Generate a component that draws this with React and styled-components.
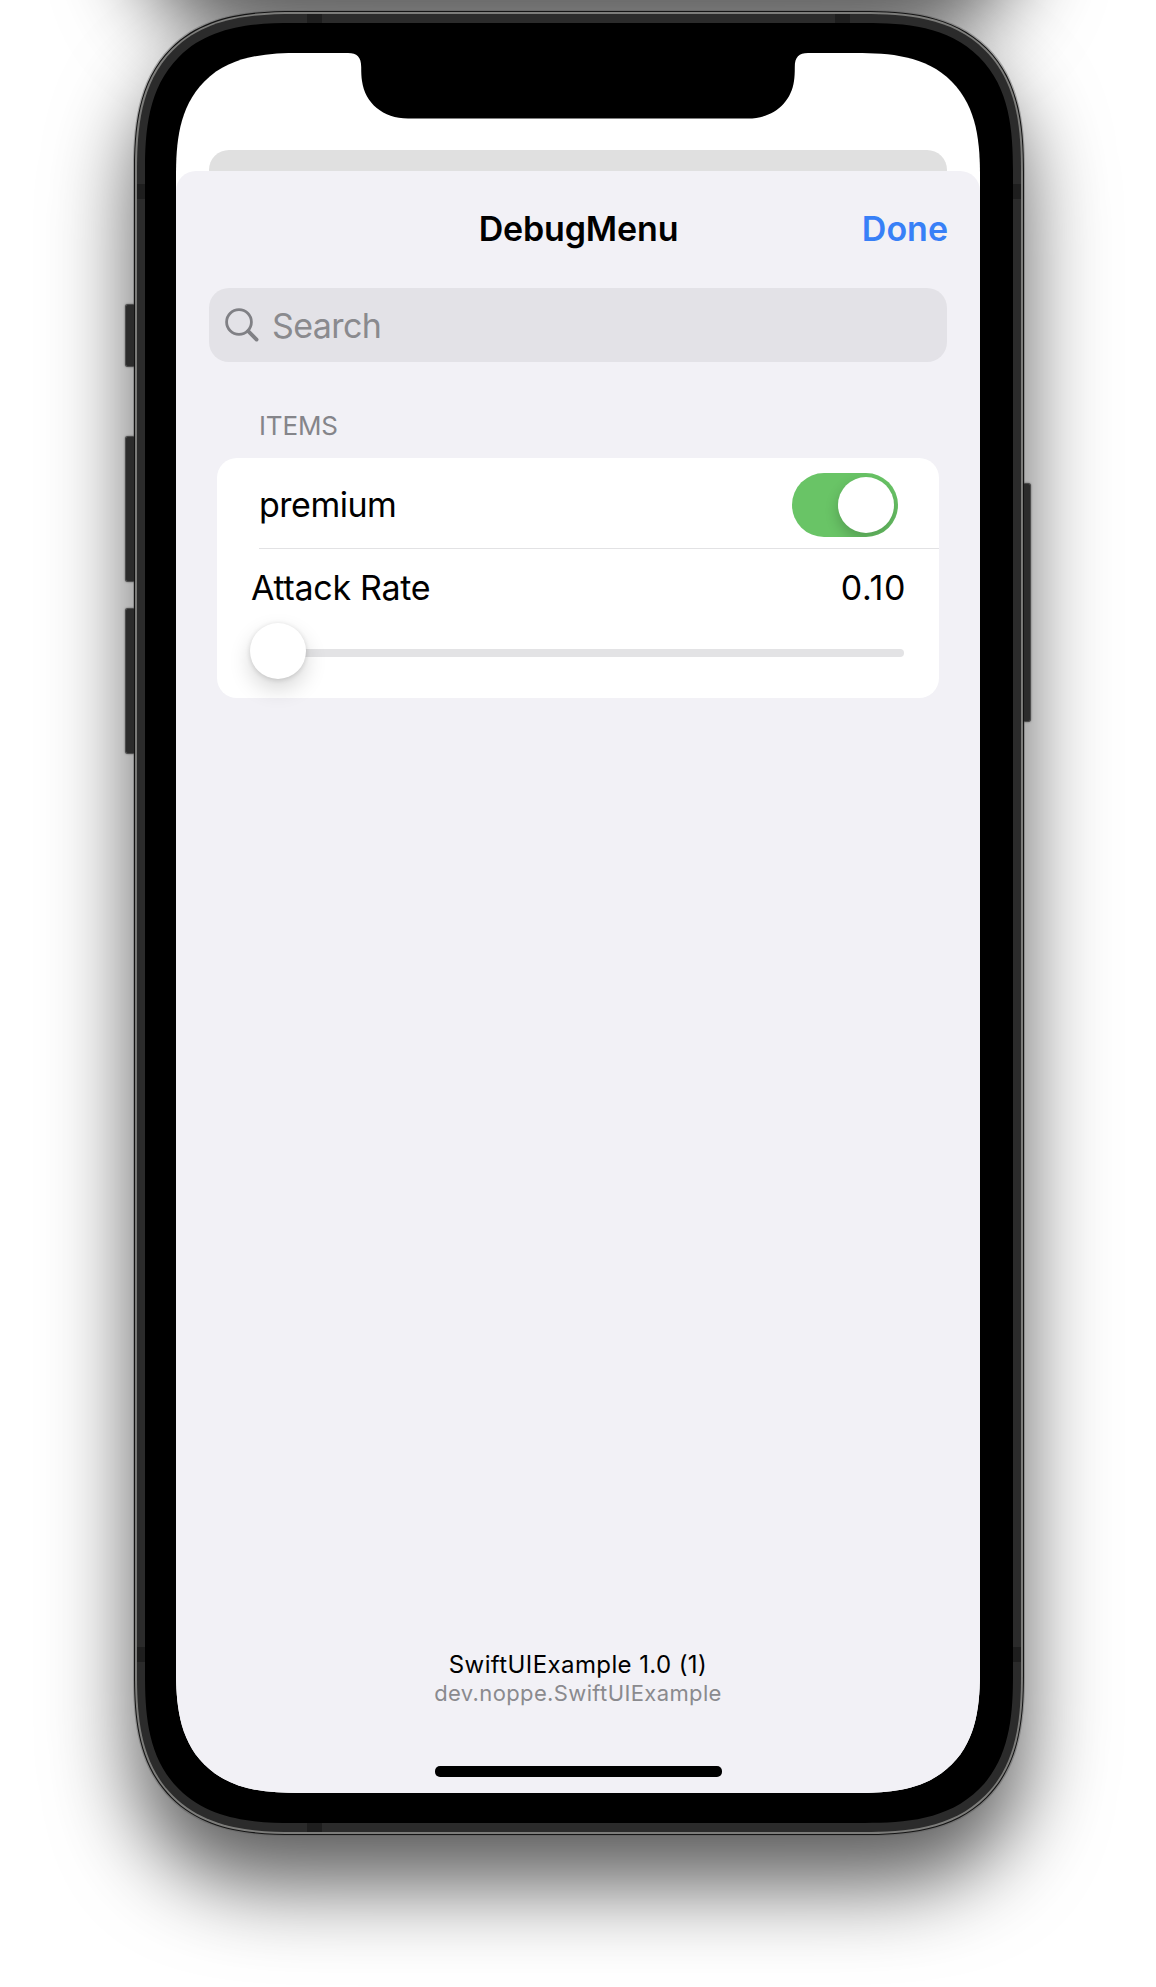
import React from "react";
import styled, { createGlobalStyle, css } from "styled-components";

const GlobalStyle = createGlobalStyle`
  * { box-sizing: border-box; }
  body {
    margin: 0;
    background: #fff;
    font-family: Inter, "Liberation Sans", sans-serif;
    -webkit-font-smoothing: antialiased;
  }
`;

const smoothCorners = (plain, smooth) => css`
  border-radius: ${plain}px;
  @supports (corner-shape: superellipse(1.415)) {
    border-radius: ${smooth}px;
    corner-shape: superellipse(1.415);
  }
`;

const Page = styled.main`
  width: 1156px;
  height: 1987px;
  overflow: hidden;
  display: flex;
  flex-direction: column;
  align-items: flex-start;
  gap: 16px;
  padding-left: 134px;
  background: #fff;
`;

const Device = styled.section`
  position: relative;
  flex: none;
  width: 890px;
  height: 1824px;
  margin-top: ${(p) => (p.$above ? "-1829px" : "0")};
  padding: 1px;
  background: #141414;
  ${smoothCorners(127, 162)}
  box-shadow: 0 0 0 1px rgba(90, 90, 90, 0.4), 0 50px 84px rgba(0, 0, 0, 0.64);
`;

const Highlight = styled.div`
  height: 100%;
  padding: 2px;
  background: #7c7c7a;
  ${smoothCorners(126, 161)}
`;

const Band = styled.div`
  position: relative;
  height: 100%;
  padding: 9px 8px;
  background: #2b2b2b;
  overflow: hidden;
  ${smoothCorners(124, 158)}
`;

const Antenna = styled.i`
  position: absolute;
  background: #1e1e1e;
  ${(p) => (p.$vertical ? "width: 8px; height: 15px;" : "width: 15px; height: 9px;")}
  ${(p) => p.$edge}: 0;
  ${(p) => p.$from}: ${(p) => p.$at}px;
`;

const Bezel = styled.div`
  height: 100%;
  padding: 30px 33px 30px 31px;
  background: #000;
  ${smoothCorners(116, 148)}
`;

const SideButton = styled.i`
  position: absolute;
  top: ${(p) => p.$top}px;
  height: ${(p) => p.$length}px;
  background: #2b2b2b;
  border: 1px solid #4c4c4c;
  box-shadow: 0 0 2px rgba(0, 0, 0, 0.5);
  ${(p) =>
    p.$right
      ? "right: -7px; width: 7px; border-left: 0; border-radius: 0 3px 3px 0;"
      : "left: -9px; width: 9px; border-right: 0; border-radius: 3px 0 0 3px;"}
`;

const Screen = styled.div`
  height: 100%;
  display: flex;
  flex-direction: column;
  background: #fff;
  overflow: hidden;
  ${smoothCorners(97, 124)}
`;

const StatusArea = styled.div`
  height: 97px;
  display: flex;
  justify-content: center;
  align-items: flex-start;
`;

const NotchShape = styled.svg`
  display: block;
  width: 460px;
  height: 66px;
`;

const PeekCard = styled.div`
  height: 40px;
  margin: 0 33px -19px;
  flex: none;
  border-radius: 20px;
  background: #e0e0e0;
`;

const Sheet = styled.div`
  flex: 1;
  z-index: 1;
  display: flex;
  flex-direction: column;
  border-radius: 20px 20px 0 0;
  background: #f2f1f6;
`;

const NavBar = styled.header`
  height: 115px;
  padding: 0 32px 0 33px;
  display: grid;
  grid-template-columns: 1fr auto 1fr;
  align-items: center;
`;

const Title = styled.h1`
  grid-column: 2;
  margin: 0;
  font-size: 34px;
  font-weight: 600;
  line-height: 42px;
  letter-spacing: -0.15px;
  color: #000;
`;

const DoneButton = styled.button`
  justify-self: end;
  padding: 0;
  border: 0;
  background: none;
  font: 600 34px/42px Inter, "Liberation Sans", sans-serif;
  color: #3880f7;
`;

const SearchField = styled.label`
  height: 74px;
  margin: 2px 33px 0;
  padding-left: 15px;
  display: flex;
  align-items: center;
  gap: 13px;
  border-radius: 20px;
  background: #e3e2e7;
`;

const SearchIcon = styled.svg`
  width: 35px;
  height: 36px;
  flex: none;
`;

const Placeholder = styled.span`
  padding-top: 2px;
  font-size: 34px;
  line-height: 42px;
  letter-spacing: -0.6px;
  color: #8a8a8e;
`;

const SectionTitle = styled.h2`
  margin: 48px 0 0 83px;
  font-size: 26px;
  font-weight: 400;
  line-height: 32px;
  letter-spacing: -0.15px;
  color: #85858a;
`;

const List = styled.div`
  height: 240px;
  margin: 16px 41px 0;
  border-radius: 20px;
  background: #fff;
`;

const ToggleRow = styled.div`
  height: 91px;
  margin-left: 42px;
  padding: 3px 41px 0 0;
  display: flex;
  align-items: center;
  justify-content: space-between;
  border-bottom: 1.5px solid #e2e2e4;
`;

const RowText = styled.span`
  font-size: 34px;
  line-height: 42px;
  letter-spacing: ${(p) => p.$tracking}px;
  color: #000;
`;

const Switch = styled.div`
  width: 106px;
  height: 64px;
  padding: 4px;
  display: flex;
  justify-content: flex-end;
  overflow: hidden;
  border-radius: 32px;
  background: #69c466;
`;

const SwitchKnob = styled.i`
  width: 56px;
  height: 56px;
  border-radius: 50%;
  background: #fff;
  box-shadow: 0 6px 14px rgba(0, 0, 0, 0.2);
`;

const SliderRow = styled.div`
  padding: 17.5px 35px 0 34px;
  display: flex;
  flex-direction: column;
  gap: 14px;
`;

const SliderHead = styled.div`
  margin-right: -2px;
  display: flex;
  justify-content: space-between;
`;

const Slider = styled.div`
  height: 56px;
  margin-left: -1px;
  display: flex;
  align-items: center;
`;

const SliderKnob = styled.i`
  flex: none;
  z-index: 1;
  width: 56px;
  height: 56px;
  border-radius: 50%;
  background: #fff;
  box-shadow: 0 10px 22px rgba(0, 0, 0, 0.16), 0 1px 5px rgba(0, 0, 0, 0.14);
`;

const SliderTrack = styled.div`
  flex: 1;
  height: 8px;
  margin: 5px 0 0 -20px;
  border-radius: 4px;
  background: #e3e3e5;
`;

const Footer = styled.footer`
  margin-top: auto;
  display: flex;
  flex-direction: column;
  align-items: center;
`;

const AppVersion = styled.span`
  font-size: 24px;
  line-height: 28px;
  letter-spacing: 0.4px;
  color: #000;
`;

const BundleId = styled.span`
  font-size: 22px;
  line-height: 28px;
  letter-spacing: 0.37px;
  color: #8a8a8e;
`;

const HomeIndicator = styled.div`
  width: 287px;
  height: 10.5px;
  margin: 59.5px 0 16.5px;
  border-radius: 5px;
  background: #000;
`;

export default function App() {
  return (
    <>
      <GlobalStyle />
      <Page>
        <Device $above aria-hidden="true" />
        <Device>
          <SideButton $top={293} $length={63} />
          <SideButton $top={425} $length={146} />
          <SideButton $top={597} $length={146} />
          <SideButton $right $top={472} $length={239} />
          <Highlight>
            <Band>
              <Antenna $edge="top" $from="left" $at={170} />
              <Antenna $edge="top" $from="right" $at={171} />
              <Antenna $edge="bottom" $from="left" $at={170} />
              <Antenna $vertical $edge="left" $from="top" $at={170} />
              <Antenna $vertical $edge="right" $from="top" $at={170} />
              <Antenna $vertical $edge="left" $from="bottom" $at={170} />
              <Antenna $vertical $edge="right" $from="bottom" $at={170} />
              <Bezel>
                <Screen>
                  <StatusArea>
                    <NotchShape viewBox="0 0 460 66">
                      <path
                        d="M0 0H460C451 0 446.8 4 446.8 14C446.8 20 446.6 24 446 28C443 50 425 65.5 400 65.5H60C35 65.5 17 50 14 28C13.4 24 13.2 20 13.2 14C13.2 4 9 0 0 0Z"
                        fill="#000"
                      />
                    </NotchShape>
                  </StatusArea>
                  <PeekCard />
                  <Sheet>
                    <NavBar>
                      <Title>DebugMenu</Title>
                      <DoneButton>Done</DoneButton>
                    </NavBar>
                    <SearchField>
                      <SearchIcon viewBox="0 0 35 36" fill="none" stroke="#808085">
                        <circle cx="15" cy="15" r="12.4" strokeWidth="2.8" />
                        <path d="M24.2 24.2L32.6 32.6" strokeWidth="3.8" strokeLinecap="round" />
                      </SearchIcon>
                      <Placeholder>Search</Placeholder>
                    </SearchField>
                    <SectionTitle>ITEMS</SectionTitle>
                    <List>
                      <ToggleRow>
                        <RowText $tracking={-0.5}>premium</RowText>
                        <Switch>
                          <SwitchKnob />
                        </Switch>
                      </ToggleRow>
                      <SliderRow>
                        <SliderHead>
                          <RowText $tracking={-0.3}>Attack Rate</RowText>
                          <RowText $tracking={0.65}>0.10</RowText>
                        </SliderHead>
                        <Slider>
                          <SliderKnob />
                          <SliderTrack />
                        </Slider>
                      </SliderRow>
                    </List>
                    <Footer>
                      <AppVersion>SwiftUIExample 1.0 (1)</AppVersion>
                      <BundleId>dev.noppe.SwiftUIExample</BundleId>
                      <HomeIndicator />
                    </Footer>
                  </Sheet>
                </Screen>
              </Bezel>
            </Band>
          </Highlight>
        </Device>
      </Page>
    </>
  );
}
